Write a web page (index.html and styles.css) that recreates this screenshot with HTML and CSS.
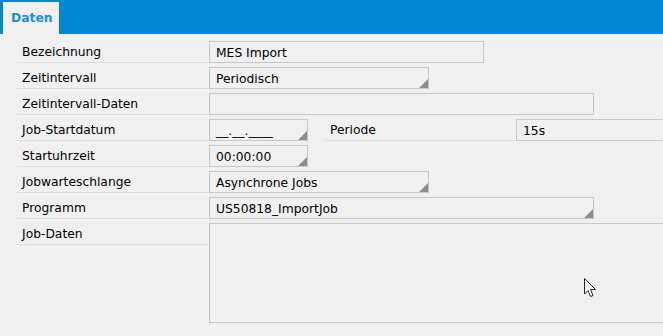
FILE: index.html
```html
<!DOCTYPE html>
<html>
	<head>
		<link rel="stylesheet" href="styles.css">
	</head>
	<body>
		<div class="tabbar">
			<div class="tab">Daten</div>
		</div>
		<div class="form">
			<div class="row">
				<div class="label">Bezeichnung</div>
				<div class="field w275">MES Import</div>
			</div>
			<div class="row">
				<div class="label">Zeitintervall</div>
				<div class="field w220 select">Periodisch</div>
			</div>
			<div class="row">
				<div class="label">Zeitintervall-Daten</div>
				<div class="field w385"></div>
			</div>
			<div class="row">
				<div class="label">Job-Startdatum</div>
				<div class="field w99 select">__.__.____</div>
				<div class="label second">Periode</div>
				<div class="field wide">15s</div>
			</div>
			<div class="row">
				<div class="label">Startuhrzeit</div>
				<div class="field w99 select">00:00:00</div>
			</div>
			<div class="row">
				<div class="label">Jobwarteschlange</div>
				<div class="field w220 select">Asynchrone Jobs</div>
			</div>
			<div class="row">
				<div class="label">Programm</div>
				<div class="field w385 select">US50818_ImportJob</div>
			</div>
			<div class="row">
				<div class="label">Job-Daten</div>
				<div class="field area"></div>
			</div>
		</div>
		<svg class="cursor" width="13" height="20" viewBox="0 0 13 20">
			<path d="M0.5 0.5 L0.5 16 L4 12.5 L6.5 18.5 L9 17.5 L6.5 11.5 L11.5 11.5 Z" fill="#fff" stroke="#222" stroke-width="1"/>
		</svg>
	</body>
</html>
```

FILE: styles.css
```css
*{
	margin: 0;
	padding: 0;
	box-sizing: border-box;
}
body{
	width: 663px;
	height: 336px;
	overflow: hidden;
	background-color: #f0f0f0;
	font-family: "DejaVu Sans", Verdana, sans-serif;
	font-size: 12.3px;
	color: #000;
	position: relative;
}
.tabbar{
	height: 34px;
	background-color: #0288d1;
	padding: 2px 0 0 3px;
}
.tab{
	width: 56px;
	height: 32px;
	background-color: #f0f0f0;
	color: #1b8fdc;
	font-weight: bold;
	padding-left: 8px;
	line-height: 32px;
}
.form{
	padding: 7px 0 0 17px;
}
.row{
	display: flex;
	align-items: flex-start;
	margin-bottom: 4px;
	white-space: nowrap;
}
.label{
	flex: none;
	width: 192px;
	height: 22px;
	border-bottom: 1px solid #dedede;
	padding-left: 5px;
	line-height: 23px;
}
.label.second{
	width: 191px;
	margin-left: 17px;
}
.field{
	flex: none;
	position: relative;
	height: 22px;
	border: 1px solid #c6c6c6;
	padding: 1px 6px 0;
	line-height: 20px;
}
.select::after{
	content: "";
	position: absolute;
	right: 0;
	bottom: 0;
	border-left: 9px solid transparent;
	border-bottom: 9px solid #8e8e8e;
}
.w99{
	width: 99px;
}
.w220{
	width: 220px;
}
.w275{
	width: 275px;
}
.w385{
	width: 385px;
}
.wide{
	width: 146px;
	border-right: none;
}
.area{
	width: 454px;
	height: 100px;
	border-right: none;
}
.cursor{
	position: absolute;
	left: 584px;
	top: 278px;
}
```
